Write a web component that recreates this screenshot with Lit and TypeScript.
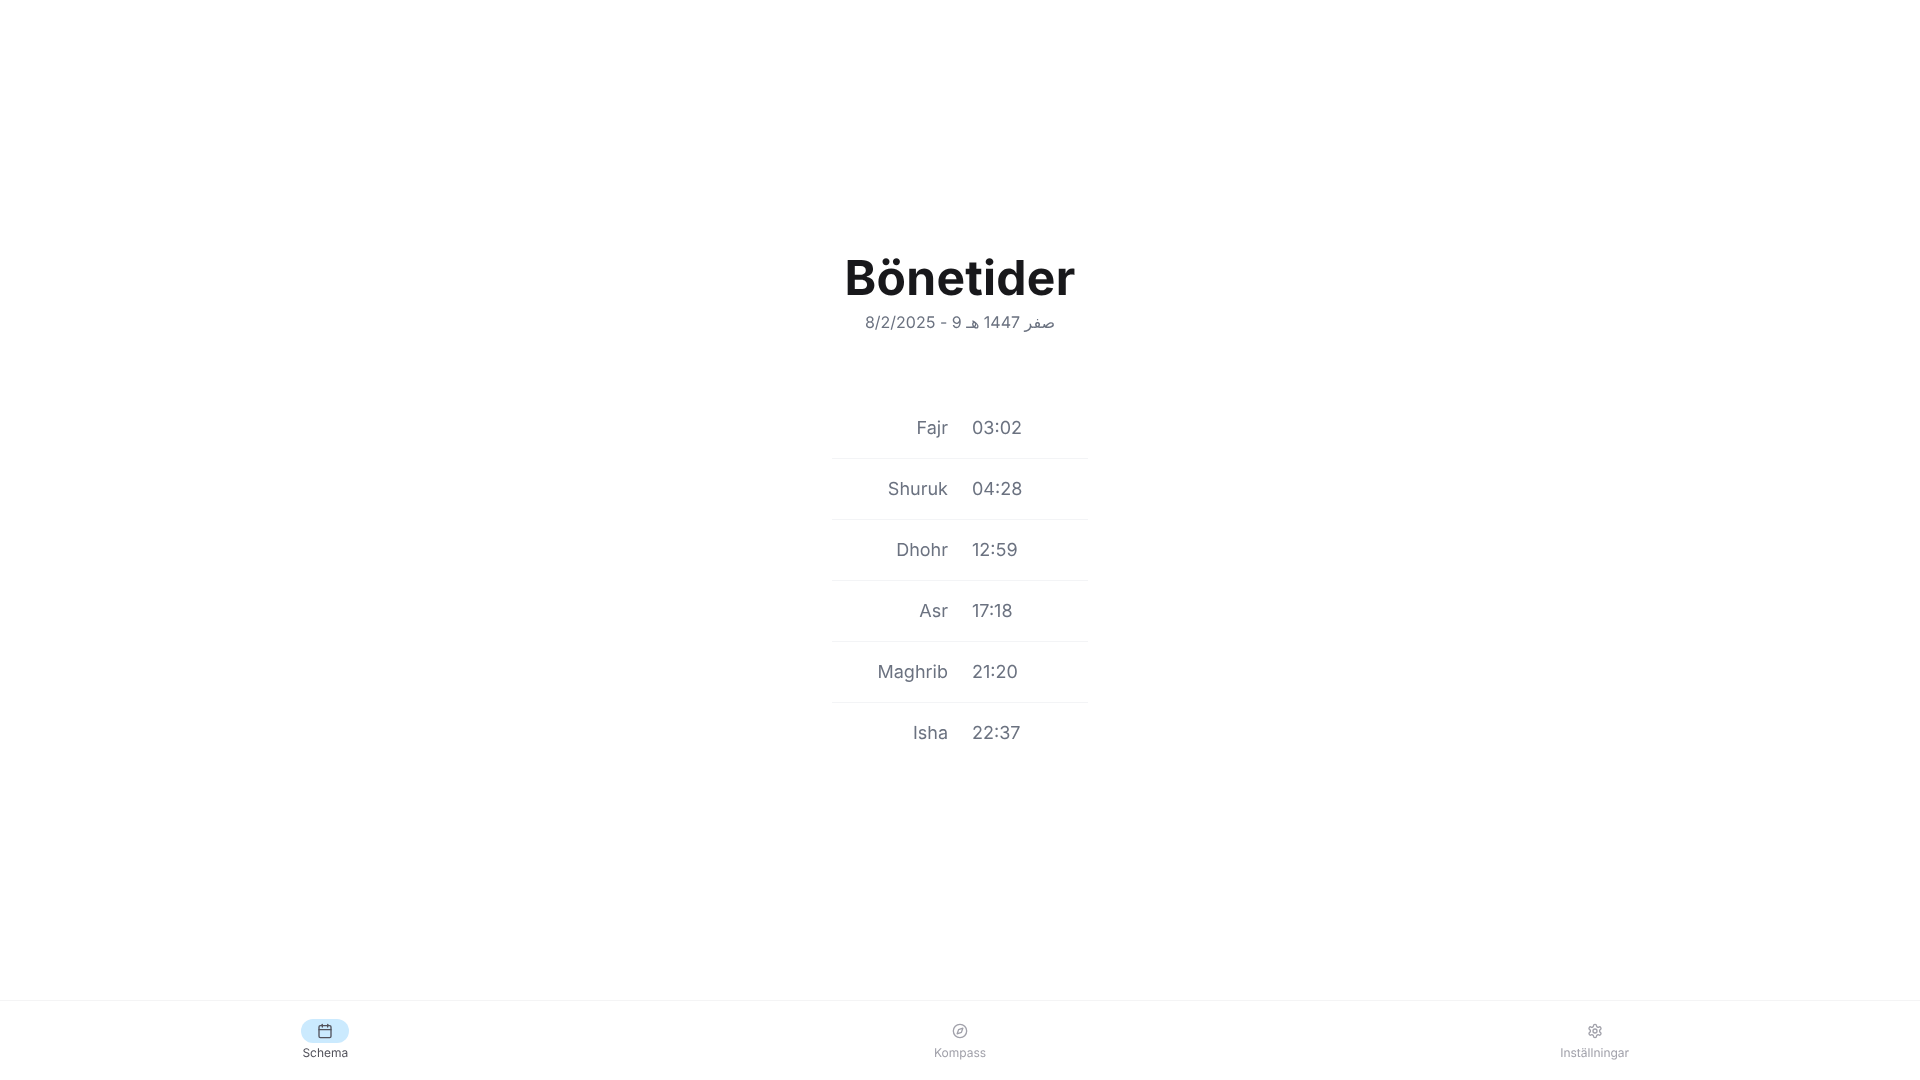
import { LitElement, html, css } from "lit";
import { customElement } from "lit/decorators.js";

const TIMES: [string, string][] = [
  ["Fajr", "03:02"],
  ["Shuruk", "04:28"],
  ["Dhohr", "12:59"],
  ["Asr", "17:18"],
  ["Maghrib", "21:20"],
  ["Isha", "22:37"],
];

@customElement("app-root")
export class AppRoot extends LitElement {
  static styles = css`
    :host {
      display: flex;
      flex-direction: column;
      height: 1080px;
      background: #fff;
      font-family: Inter, "Noto Sans", sans-serif;
      text-rendering: geometricPrecision;
      font-optical-sizing: none;
    }
    main {
      flex: 1;
      display: flex;
      flex-direction: column;
      align-items: center;
      padding-top: 250px;
      will-change: transform;
    }
    h1 {
      margin: 0;
      font-size: 48px;
      line-height: 56px;
      font-weight: 700;
      letter-spacing: 0.25px;
      color: #18181b;
    }
    .date {
      margin: 4px 0 0;
      font-size: 16px;
      line-height: 24px;
      letter-spacing: -0.05px;
      color: #6b7280;
    }
    .table {
      margin-top: 64px;
      width: 256px;
    }
    .row {
      display: grid;
      grid-template-columns: 1fr 1fr;
      height: 60px;
      align-items: center;
      font-size: 18px;
      color: #6b7280;
      border-bottom: 1px solid #f3f4f6;
    }
    .row:last-child {
      border-bottom: 0;
    }
    .name {
      text-align: right;
      padding-right: 12px;
    }
    .time {
      padding-left: 12px;
    }
    nav {
      display: grid;
      grid-template-columns: repeat(3, 1fr);
      padding: 0 8px;
      height: 79px;
      border-top: 1px solid #f4f4f5;
      will-change: transform;
    }
    .tab {
      display: flex;
      flex-direction: column;
      align-items: center;
      padding-top: 18px;
      font-size: 12px;
      line-height: 16px;
      color: #a1a1aa;
    }
    .tab.active {
      color: #52525b;
    }
    .pill {
      width: 48px;
      height: 24px;
      border-radius: 12px;
      display: flex;
      align-items: center;
      justify-content: center;
      margin-bottom: 2px;
    }
    .active .pill {
      background: #cbeafe;
    }
    svg {
      width: 16px;
      height: 16px;
      fill: none;
      stroke: currentColor;
      stroke-width: 2;
      stroke-linecap: round;
      stroke-linejoin: round;
    }
  `;

  render() {
    return html`
      <main>
        <h1>Bönetider</h1>
        <p class="date">8/2/2025 - 9 صفر 1447 هـ</p>
        <div class="table">
          ${TIMES.map(
            ([n, t]) => html`<div class="row"><span class="name">${n}</span><span class="time">${t}</span></div>`
          )}
        </div>
      </main>
      <nav>
        <div class="tab active">
          <span class="pill">
            <svg viewBox="0 0 24 24">
              <path d="M8 2v4" /><path d="M16 2v4" />
              <rect x="3" y="4" width="18" height="18" rx="2" />
              <path d="M3 10h18" />
            </svg>
          </span>
          Schema
        </div>
        <div class="tab">
          <span class="pill">
            <svg viewBox="0 0 24 24">
              <circle cx="12" cy="12" r="10" />
              <path d="m16.24 7.76-2.12 6.36-6.36 2.12 2.12-6.36 6.36-2.12z" />
            </svg>
          </span>
          Kompass
        </div>
        <div class="tab">
          <span class="pill">
            <svg viewBox="0 0 24 24">
              <path d="M12.22 2h-.44a2 2 0 0 0-2 2v.18a2 2 0 0 1-1 1.73l-.43.25a2 2 0 0 1-2 0l-.15-.08a2 2 0 0 0-2.73.73l-.22.38a2 2 0 0 0 .73 2.73l.15.1a2 2 0 0 1 1 1.72v.51a2 2 0 0 1-1 1.74l-.15.09a2 2 0 0 0-.73 2.73l.22.38a2 2 0 0 0 2.73.73l.15-.08a2 2 0 0 1 2 0l.43.25a2 2 0 0 1 1 1.73V20a2 2 0 0 0 2 2h.44a2 2 0 0 0 2-2v-.18a2 2 0 0 1 1-1.73l.43-.25a2 2 0 0 1 2 0l.15.08a2 2 0 0 0 2.73-.73l.22-.39a2 2 0 0 0-.73-2.73l-.15-.08a2 2 0 0 1-1-1.74v-.5a2 2 0 0 1 1-1.74l.15-.09a2 2 0 0 0 .73-2.73l-.22-.38a2 2 0 0 0-2.73-.73l-.15.08a2 2 0 0 1-2 0l-.43-.25a2 2 0 0 1-1-1.73V4a2 2 0 0 0-2-2z" />
              <circle cx="12" cy="12" r="3" />
            </svg>
          </span>
          Inställningar
        </div>
      </nav>
    `;
  }
}
